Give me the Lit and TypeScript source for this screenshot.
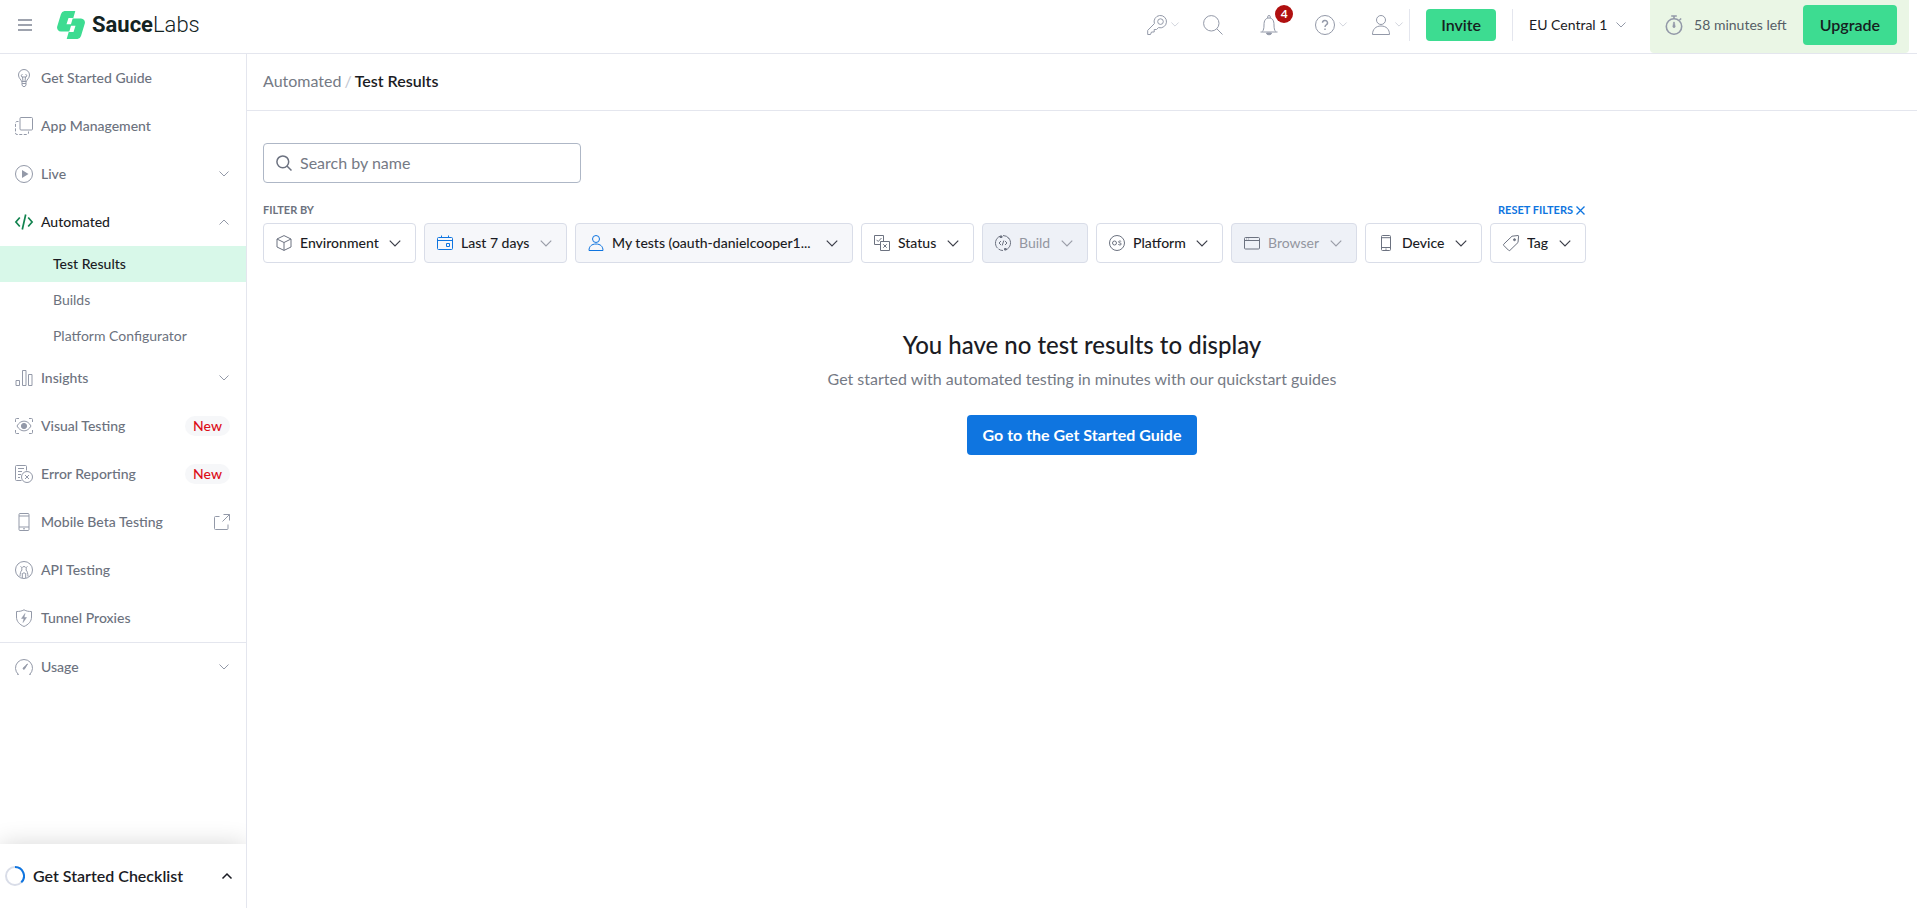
import { LitElement, html, svg, css, nothing } from "lit";
import type { SVGTemplateResult } from "lit";
import { customElement, property, state } from "lit/decorators.js";
import { classMap } from "lit/directives/class-map.js";

interface Glyph {
  box: string;
  art: SVGTemplateResult;
}

const g = (box: string, art: SVGTemplateResult): Glyph => ({ box, art });

const glyphs: Record<string, Glyph> = {
  menu: g("0 0 14 12", svg`<path stroke-width="1.5" d="M0 1h14M0 6h14M0 11h14"/>`),
  down: g("0 0 10 6", svg`<path d="M.5.5 5 5 9.5.5"/>`),
  up: g("0 0 10 6", svg`<path d="M.5 5.500 5 1l4.500 4.500"/>`),
  bulb: g("0 0 18 18", svg`
    <path d="M6.500 12.500C6.500 10.500 3.500 9.500 3.500 6a5.500 5.500 0 0 1 11 0c0 3.500-3 4.500-3 6.500z"/>
    <path d="M7 12.500v3.500l1 1.500h2l1-1.500v-3.500M7 14.500h4M8 12.500 7.500 8M10 12.500l.5-4.500M7.500 8a1.200 1.200 0 1 1 0-2.500M10.500 8a1.200 1.200 0 1 0 0-2.500M7 8h4"/>`),
  layers: g("0 0 18 18", svg`
    <rect x="5" y=".5" width="12.500" height="12.500" rx="1"/>
    <path stroke-dasharray="3 1.500" d="M3.500 4.500H2a1.500 1.500 0 0 0-1.500 1.500v10A1.500 1.500 0 0 0 2 17.500h10a1.500 1.500 0 0 0 1.500-1.500v-1.500"/>`),
  play: g("0 0 18 18", svg`<circle cx="9" cy="9" r="8.500"/><path fill="currentColor" stroke="none" d="M7 5v8l6.500-4z"/>`),
  code: g("0 0 18 18", svg`<path stroke-width="1.700" d="M4.800 4.500.9 9l3.900 4.500M13.200 4.500 17.100 9l-3.900 4.500M10.700 1.500 7.300 16.500"/>`),
  bars: g("0 0 18 18", svg`<path d="M1 11.500h3.500v5H1zM7.500 1.500H11v15H7.500zM13.500 5.500H17v11h-3.500z"/>`),
  eye: g("0 0 18 18", svg`
    <path d="M.5 5V2.500A1 1 0 0 1 1.500 1.500H4M14 1.500h2.500a1 1 0 0 1 1 1V5M17.500 13v2.500a1 1 0 0 1-1 1H14M4 16.500H1.500a1 1 0 0 1-1-1V13"/>
    <path d="M2 9c3.500-6.500 10.500-6.500 14 0-3.500 6.500-10.500 6.500-14 0z"/>
    <circle cx="9" cy="9" r="2.600" fill="currentColor"/>`),
  report: g("0 0 18 18", svg`
    <path d="M6.500 15.500H1.500a1 1 0 0 1-1-1v-13a1 1 0 0 1 1-1h9a1 1 0 0 1 1 1v4M3 3.500h6M3 6.500h4M3 9.500h3M3 12.500h2"/>
    <circle cx="12" cy="12" r="5.500"/><path d="m10 10 4 4M14 10l-4 4"/>`),
  phone: g("0 0 18 18", svg`<rect x="4" y=".5" width="10" height="17" rx="1"/><path d="M4 3h10M4 14h10M8 15.800h2"/>`),
  api: g("0 0 18 18", svg`
    <circle cx="9" cy="9" r="8.500"/>
    <path d="M5 15.500c.2-3 .5-5 2-6.500a2.300 2.300 0 1 1 4 0c1.500 1.500 1.800 3.500 2 6.500M7.300 17v-5M10.700 17v-5M9 11v2M6.800 6.500 5.500 5.500M11.200 6.500l1.300-1"/>`),
  shield: g("0 0 18 18", svg`
    <path d="M9 .8c2.500 1.500 4.800 1.700 7.500 1.700v5.500c0 4.500-3 7.500-7.500 9.500C4.500 15.500 1.500 12.500 1.500 8V2.500C4.200 2.500 6.500 2.300 9 .8z"/>
    <path fill="currentColor" stroke-width=".5" d="M10 4.500 6.500 9.500H9l-1 4 3.500-5H9z"/>`),
  gauge: g("0 0 18 18", svg`
    <path d="M3.500 16.500a8.500 8.500 0 1 1 11 0"/><path d="m3.500 16.500-1.500-.5M14.500 16.500l1.500-.5"/>
    <path fill="currentColor" d="M8 10.300 12.500 6 9.300 11.200a1 1 0 0 1-1.300-.9z"/>`),
  external: g("0 0 16 16", svg`<path d="M5.500 2.500h-4a1 1 0 0 0-1 1v11a1 1 0 0 0 1 1h11.500a1 1 0 0 0 1-1v-4M9.500.5h6v6M15.500.5 8.500 7.500"/>`),
  key: g("0 0 20 20", svg`
    <path d="M7.400 8.600A6.200 6.200 0 1 1 11.500 12.600L9.500 14.500H7.200V17H4.500L3.500 19.500H.7V15.400z"/>
    <circle cx="13.500" cy="6.600" r="2.800"/>`),
  search: g("0 0 20 20", svg`<circle cx="8.300" cy="8.300" r="7.700"/><path d="m13.800 13.800 5.700 5.700"/>`),
  bell: g("0 0 20 20", svg`
    <path d="M1.500 17h17M3.500 16.500c1-1.500 1.500-3 1.500-6.500 0-4.500 1.500-7 5-7s5 2.500 5 7c0 3.500.5 5 1.500 6.500M8.700 3V1.800a1.300 1.300 0 0 1 2.600 0V3"/>
    <path fill="currentColor" d="M7.500 18h5a2.500 1.800 0 0 1-5 0z"/>`),
  help: g("0 0 20 20", svg`
    <circle cx="10" cy="10" r="9.500"/>
    <path stroke-width="1.400" d="M7.500 7.800a2.500 2.300 0 1 1 3.700 2c-.9.500-1.200.9-1.200 2.200M10 13.500v1.500"/>`),
  person: g("0 0 18 20", svg`<circle cx="9" cy="5" r="4.500"/><path d="M.5 19.500c0-5 3-8.500 8.500-8.500s8.500 3.500 8.500 8.500z"/>`),
  timer: g("0 0 18 20", svg`
    <circle cx="9" cy="11.500" r="7.700" stroke-width="1.600"/>
    <path stroke-width="1.600" d="M6.200 1h5.600M9 1v3M14.500 5l1.700-1.500"/>
    <path fill="currentColor" stroke-width=".5" d="M8.600 7h.8l.8 4.500a1.200 1.200 0 1 1-2.400 0z"/>`),
  lens: g("0 0 16 16", svg`<circle cx="6.800" cy="6.800" r="5.900" stroke-width="1.500"/><path stroke-width="1.500" d="m11 11 4.500 4.500"/>`),
  cube: g("0 0 16 16", svg`<path d="M8 .6 15 4v8l-7 3.400L1 12V4zM1 4l7 3.500L15 4M8 7.500v7.900"/>`),
  calendar: g("0 0 16 16", svg`<rect x=".5" y="2.500" width="15" height="12" rx="1"/><path d="M.5 5.500h15M4.500.5v2M11.500.5v2M9.500 8.500h3v3h-3z"/>`),
  user: g("0 0 16 16", svg`<circle cx="8" cy="4" r="3.500"/><path d="M1 15.500c0-4 2.500-6.500 7-6.500s7 2.500 7 6.500z"/>`),
  status: g("0 0 16 16", svg`<path d="M6.500 9.500h-6v-9h9v6M6.500 6.500h9v9h-9zM2.500 4.800l1.700 1.700L7.500 3M9.300 9.300l3.400 3.400M12.700 9.300l-3.400 3.400"/>`),
  build: g("0 0 16 16", svg`
    <path d="M5 1.200a7.500 7.500 0 0 0-2.500 12M8 .5a7.500 7.500 0 0 1 6 3M11 14.800a7.500 7.500 0 0 0 2.500-12M8 15.500a7.500 7.500 0 0 1-4.500-1.500M6 6 4 8l2 2M10 6l2 2-2 2M8.800 5.500l-1.600 5"/>
    <path fill="currentColor" d="M5 1h2v1.500H5zM9.500 13.500h1.700V15H9.500z"/>`),
  os: g("0 0 16 16", svg`
    <circle cx="8" cy="8" r="7.500"/><circle cx="5.500" cy="8" r="2"/>
    <path d="M12.200 6.500c-.7-.7-2.700-.7-2.700.4 0 1.200 2.800.8 2.800 2.100 0 1.200-2.200 1.200-3 .4"/>`),
  browser: g("0 0 16 16", svg`<rect x=".5" y="2.500" width="15" height="11.500" rx="1"/><path d="M.5 5.500h15M2.300 4h.8M4.300 4h.8"/>`),
  device: g("0 0 16 16", svg`<rect x="3.500" y=".5" width="9" height="15" rx="1"/><path d="M3.500 2.700h9M3.500 12.500h9M7.300 14.100h1.400"/>`),
  tag: g("0 0 16 16", svg`<path d="M9 1.200 15 .5a.6.600 0 0 1 .6.600L15 7.500 7 15.300a1 1 0 0 1-1.400 0L.8 10.500a1 1 0 0 1 0-1.400z"/><circle cx="11.500" cy="4.700" r="1" fill="currentColor"/>`),
  close: g("0 0 9 9", svg`<path stroke-width="1.300" d="m.5.5 8 8M8.500.5l-8 8"/>`),
};

@customElement("sl-glyph")
export class SlGlyph extends LitElement {
  @property() name = "";

  static styles = css`
    :host {
      display: inline-flex;
      flex: none;
    }
    svg {
      width: 100%;
      height: 100%;
      fill: none;
      stroke: currentColor;
      stroke-width: 1;
      overflow: visible;
    }
    :host(.strong) svg {
      stroke-width: 1.5;
    }
  `;

  render() {
    const glyph = glyphs[this.name];
    return glyph ? html`<svg viewBox=${glyph.box} aria-hidden="true">${glyph.art}</svg>` : nothing;
  }
}

interface NavEntry {
  label: string;
  icon: string;
  kind?: "group" | "new" | "external";
  children?: string[];
  divided?: boolean;
}

interface Filter {
  label: string;
  icon: string;
  state?: "set" | "off";
  wide?: boolean;
  soft?: boolean;
}

@customElement("app-root")
export class AppRoot extends LitElement {
  @state() private open = "Automated";

  private nav: NavEntry[] = [
    { label: "Get Started Guide", icon: "bulb" },
    { label: "App Management", icon: "layers" },
    { label: "Live", icon: "play", kind: "group" },
    {
      label: "Automated",
      icon: "code",
      kind: "group",
      children: ["Test Results", "Builds", "Platform Configurator"],
    },
    { label: "Insights", icon: "bars", kind: "group" },
    { label: "Visual Testing", icon: "eye", kind: "new" },
    { label: "Error Reporting", icon: "report", kind: "new" },
    { label: "Mobile Beta Testing", icon: "phone", kind: "external" },
    { label: "API Testing", icon: "api" },
    { label: "Tunnel Proxies", icon: "shield" },
    { label: "Usage", icon: "gauge", kind: "group", divided: true },
  ];

  private filters: Filter[] = [
    { label: "Environment", icon: "cube" },
    { label: "Last 7 days", icon: "calendar", state: "set", soft: true },
    { label: "My tests (oauth-danielcooper1...", icon: "user", state: "set", wide: true },
    { label: "Status", icon: "status" },
    { label: "Build", icon: "build", state: "off" },
    { label: "Platform", icon: "os" },
    { label: "Browser", icon: "browser", state: "off" },
    { label: "Device", icon: "device" },
    { label: "Tag", icon: "tag" },
  ];

  static styles = css`
    :host {
      display: flex;
      flex-direction: column;
      min-height: 100vh;
      background: #fff;
      color: #1b1c24;
      font: 14px/20px Lato, "Open Sans", sans-serif;
      --line: #e4e6ee;
      --muted: #6c727e;
      --glyph: #9399a8;
      --green: #3ddc91;
      --blue: #0f75e0;
    }
    * {
      box-sizing: border-box;
    }
    a {
      color: inherit;
      text-decoration: none;
    }
    button,
    select,
    input {
      margin: 0;
      padding: 0;
      border: 0;
      background: none;
      color: inherit;
      font: inherit;
    }
    button {
      cursor: pointer;
    }

    .top {
      display: flex;
      align-items: center;
      height: 54px;
      padding: 0 8px 0 18px;
      border-bottom: 1px solid var(--line);
    }
    .menu {
      display: flex;
      color: #7f8594;
      margin: 0 25px 4px 0;
    }
    .menu sl-glyph {
      width: 14px;
      height: 12px;
    }
    .brand {
      display: flex;
      align-items: center;
      gap: 7px;
      margin: 0 auto 4px 0;
      color: #132322;
      font: 300 22px/28px Roboto, sans-serif;
    }
    .brand svg {
      width: 28px;
      height: 28px;
    }
    .brand b {
      font-weight: 700;
    }
    .tools {
      display: flex;
      align-items: center;
      gap: 36px;
      padding: 0 6px 4px 0;
      color: var(--glyph);
    }
    .tool {
      display: flex;
      align-items: center;
      position: relative;
      gap: 4px;
    }
    .tool sl-glyph {
      width: 20px;
      height: 20px;
    }
    .tool .caret {
      width: 8px;
      height: 5px;
      color: #c6cad4;
    }
    .tool.menuable {
      margin-right: -12px;
    }
    .tool.menuable:last-child {
      margin-right: 0;
    }
    .count {
      position: absolute;
      left: 16px;
      top: -10px;
      width: 18px;
      height: 18px;
      border-radius: 50%;
      background: #b01010;
      color: #fff;
      font-size: 12px;
      font-weight: 700;
      line-height: 18px;
      text-align: center;
    }
    .boxed {
      display: flex;
      align-items: center;
      height: 32px;
      margin-bottom: 4px;
      padding: 0 16px;
      border-left: 1px solid var(--line);
    }
    .cta {
      height: 32px;
      border-radius: 4px;
      background: var(--green);
      color: #16211f;
      font-size: 16px;
      font-weight: 600;
      padding: 0 15px;
    }
    .region {
      position: relative;
      display: flex;
      align-items: center;
      gap: 8px;
    }
    .region select {
      appearance: none;
    }
    .region sl-glyph {
      width: 10px;
      height: 6px;
      color: var(--glyph);
    }
    .quota {
      display: flex;
      align-items: center;
      height: 53px;
      margin-left: 8px;
      padding: 0 12px 3px 15px;
      border-radius: 0 0 4px 4px;
      background: #eaf6e5;
      color: #565e66;
    }
    .quota sl-glyph {
      width: 18px;
      height: 20px;
      margin-right: 11px;
      color: var(--glyph);
    }
    .quota .cta {
      height: 40px;
      margin-left: 16px;
      padding: 0 17px;
    }

    .page {
      flex: 1;
      display: grid;
      grid-template-columns: 247px minmax(0, 1fr);
    }
    .side {
      display: flex;
      flex-direction: column;
      border-right: 1px solid var(--line);
      overflow: hidden;
    }
    .side ul {
      list-style: none;
      margin: 0;
      padding: 0;
    }
    .item {
      display: flex;
      align-items: center;
      gap: 8px;
      width: 100%;
      height: 48px;
      padding: 0 16px 0 15px;
      color: var(--muted);
      font-weight: 500;
      text-align: left;
    }
    .item sl-glyph {
      width: 18px;
      height: 18px;
      color: var(--glyph);
    }
    .item .name {
      flex: 1;
    }
    .item .caret {
      width: 10px;
      height: 6px;
      margin-right: 1px;
    }
    .item .out {
      width: 16px;
      height: 16px;
    }
    .item.open {
      color: #1b1c24;
    }
    .item.open .lead {
      color: #12834f;
    }
    .divided {
      border-top: 1px solid var(--line);
    }
    .badge {
      height: 20px;
      padding: 0 8px;
      border-radius: 10px;
      background: #f6f7f9;
      color: #dc0d18;
    }
    .sub {
      display: flex;
      align-items: center;
      height: 36px;
      padding-left: 53px;
      color: var(--muted);
    }
    .sub.current {
      background: #d8f8e9;
      color: #1b1c24;
      font-weight: 500;
    }
    .checklist {
      display: flex;
      align-items: center;
      gap: 8px;
      width: 100%;
      height: 64px;
      margin-top: auto;
      padding: 0 14px 0 5px;
      background: #fff;
      box-shadow: 0 0 24px rgba(0, 0, 0, 0.16);
      font-size: 16px;
      font-weight: 600;
      text-align: left;
    }
    .checklist .name {
      flex: 1;
    }
    .checklist svg {
      width: 20px;
      height: 20px;
    }
    .checklist sl-glyph {
      width: 10px;
      height: 6px;
    }

    .crumbs {
      display: flex;
      align-items: center;
      gap: 3px;
      height: 57px;
      padding: 0 16px 2px;
      border-bottom: 1px solid var(--line);
      color: #757a85;
      font-size: 16px;
    }
    .crumbs i {
      color: #c2c6d0;
      font-style: normal;
    }
    .crumbs b {
      color: #1b1c24;
      font-weight: 600;
    }
    .body {
      padding: 32px 16px;
    }
    .search {
      display: flex;
      align-items: center;
      gap: 8px;
      width: 318px;
      height: 40px;
      padding: 0 12px;
      border: 1px solid #aeb7c6;
      border-radius: 4px;
      color: #6c7280;
    }
    .search sl-glyph {
      width: 16px;
      height: 16px;
    }
    .search input {
      flex: 1;
      min-width: 0;
      outline: 0;
      font-size: 16px;
    }
    .search input::placeholder {
      color: #757a85;
      opacity: 1;
    }
    .panel {
      width: fit-content;
      margin-top: 19px;
    }
    .legend {
      display: flex;
      justify-content: space-between;
      height: 16px;
      margin-bottom: 5px;
      color: var(--muted);
      font-size: 11px;
      font-weight: 700;
      line-height: 16px;
    }
    .reset {
      display: flex;
      align-items: center;
      gap: 3px;
      padding-right: 1px;
      color: var(--blue);
    }
    .reset sl-glyph {
      width: 9px;
      height: 9px;
    }
    .filters {
      display: flex;
      flex-wrap: wrap;
      gap: 8px;
    }
    .filter {
      display: flex;
      align-items: center;
      gap: 8px;
      height: 40px;
      padding: 0 12px;
      border: 1px solid #d9dde8;
      border-radius: 4px;
      font-weight: 500;
    }
    .filter sl-glyph {
      width: 16px;
      height: 16px;
      color: #6c7280;
    }
    .filter .caret {
      width: 16px;
      height: 7px;
      color: #3b3d48;
    }
    .filter select {
      appearance: none;
      opacity: 1;
    }
    .filter.set {
      background: #f6f7fa;
    }
    .filter.set .lead {
      color: var(--blue);
    }
    .filter.off {
      background: #eef1f7;
      color: #9396a0;
      font-weight: 400;
    }
    .filter.off .caret,
    .filter.soft .caret {
      color: #9a9da8;
    }
    .filter.wide select {
      width: 204px;
    }
    .empty {
      display: flex;
      flex-direction: column;
      align-items: center;
      margin-top: 66px;
      text-align: center;
    }
    .empty h1 {
      margin: 0;
      font-size: 24px;
      font-weight: 500;
      line-height: 32px;
    }
    .empty p {
      margin: 6px 0 24px;
      color: #757a85;
      font-size: 16px;
      line-height: 24px;
    }
    .go {
      display: flex;
      align-items: center;
      height: 40px;
      padding: 0 16px;
      border-radius: 4px;
      background: var(--blue);
      color: #fff;
      font-size: 16px;
      font-weight: 700;
    }
  `;

  private toggle(label: string) {
    this.open = this.open === label ? "" : label;
  }

  private renderEntry(entry: NavEntry) {
    const open = this.open === entry.label;
    const lead = html`<sl-glyph class="lead" name=${entry.icon}></sl-glyph><span class="name">${entry.label}</span>`;
    if (entry.kind === "group") {
      return html`
        <li class=${classMap({ divided: !!entry.divided })}>
          <button
            class=${classMap({ item: true, open })}
            aria-expanded=${open ? "true" : "false"}
            @click=${() => this.toggle(entry.label)}
          >
            ${lead}<sl-glyph class="caret" name=${open ? "up" : "down"}></sl-glyph>
          </button>
          ${open && entry.children
            ? html`<ul>
                ${entry.children.map(
                  (child, i) =>
                    html`<li><a href="#" class=${classMap({ sub: true, current: i === 0 })}>${child}</a></li>`
                )}
              </ul>`
            : nothing}
        </li>
      `;
    }
    return html`
      <li>
        <a href="#" class="item">
          ${lead}
          ${entry.kind === "new" ? html`<span class="badge">New</span>` : nothing}
          ${entry.kind === "external" ? html`<sl-glyph class="out" name="external"></sl-glyph>` : nothing}
        </a>
      </li>
    `;
  }

  private renderFilter(filter: Filter) {
    const classes = {
      filter: true,
      set: filter.state === "set",
      off: filter.state === "off",
      wide: !!filter.wide,
      soft: !!filter.soft,
    };
    return html`
      <label class=${classMap(classes)}>
        <sl-glyph class="lead" name=${filter.icon}></sl-glyph>
        <select aria-label=${filter.label} ?disabled=${filter.state === "off"}>
          <option>${filter.label}</option>
        </select>
        <sl-glyph class="caret" name="down"></sl-glyph>
      </label>
    `;
  }

  render() {
    return html`
      <header class="top">
        <button class="menu" aria-label="Menu"><sl-glyph name="menu"></sl-glyph></button>
        <a href="#" class="brand">
          <svg viewBox="0 0 28 28" aria-hidden="true">
            <path
              fill="#3ddc91"
              d="M7.500 0H18.300L16.300 7H11.500L9.500 13.200h5L12.300 20.500H4A4 4 0 0 1 .2 15.500L4 3A4.200 4.200 0 0 1 7.500 0zM15.700 7.500H24a4 4 0 0 1 3.800 5L24 25a4.200 4.200 0 0 1-3.500 3H9.700l2-7h4.800l2-6.200h-5z"
            />
          </svg>
          <span><b>Sauce</b>Labs</span>
        </a>
        <div class="tools">
          <button class="tool menuable" aria-label="Credentials">
            <sl-glyph name="key"></sl-glyph><sl-glyph class="caret" name="down"></sl-glyph>
          </button>
          <button class="tool" aria-label="Search"><sl-glyph name="search"></sl-glyph></button>
          <button class="tool" aria-label="Notifications">
            <sl-glyph name="bell"></sl-glyph><span class="count">4</span>
          </button>
          <button class="tool menuable" aria-label="Help">
            <sl-glyph name="help"></sl-glyph><sl-glyph class="caret" name="down"></sl-glyph>
          </button>
          <button class="tool menuable" aria-label="Account">
            <sl-glyph name="person"></sl-glyph><sl-glyph class="caret" name="down"></sl-glyph>
          </button>
        </div>
        <div class="boxed"><button class="cta">Invite</button></div>
        <div class="boxed">
          <label class="region">
            <select aria-label="Data center">
              <option>EU Central 1</option>
            </select>
            <sl-glyph name="down"></sl-glyph>
          </label>
        </div>
        <div class="quota">
          <sl-glyph name="timer"></sl-glyph>
          <span>58 minutes left</span>
          <button class="cta">Upgrade</button>
        </div>
      </header>
      <div class="page">
        <nav class="side">
          <ul>
            ${this.nav.map((entry) => this.renderEntry(entry))}
          </ul>
          <button class="checklist">
            <svg viewBox="0 0 20 20" fill="none" stroke-width="2" aria-hidden="true">
              <circle cx="10" cy="10" r="9" stroke="#d9dde8" />
              <path stroke="#0f75e0" d="M10 1a9 9 0 0 1 6.300 15.400" />
            </svg>
            <span class="name">Get Started Checklist</span>
            <sl-glyph class="strong" name="up"></sl-glyph>
          </button>
        </nav>
        <main>
          <div class="crumbs"><a href="#">Automated</a><i>/</i><b>Test Results</b></div>
          <div class="body">
            <label class="search">
              <sl-glyph name="lens"></sl-glyph>
              <input type="text" placeholder="Search by name" aria-label="Search by name" />
            </label>
            <section class="panel">
              <div class="legend">
                <span>FILTER BY</span>
                <button class="reset">RESET FILTERS<sl-glyph name="close"></sl-glyph></button>
              </div>
              <div class="filters">${this.filters.map((filter) => this.renderFilter(filter))}</div>
            </section>
            <section class="empty">
              <h1>You have no test results to display</h1>
              <p>Get started with automated testing in minutes with our quickstart guides</p>
              <a href="#" class="go">Go to the Get Started Guide</a>
            </section>
          </div>
        </main>
      </div>
    `;
  }
}
